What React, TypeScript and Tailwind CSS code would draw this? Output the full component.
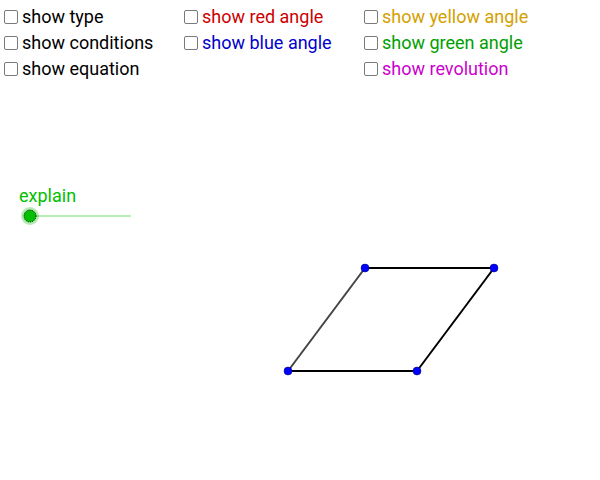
const rows: { text: string; color: string }[][] = [
  [
    { text: "show type", color: "text-black" },
    { text: "show conditions", color: "text-black" },
    { text: "show equation", color: "text-black" },
  ],
  [
    { text: "show red angle", color: "text-[#cc0000]" },
    { text: "show blue angle", color: "text-[#0000cc]" },
  ],
  [
    { text: "show yellow angle", color: "text-[#d4a000]" },
    { text: "show green angle", color: "text-[#00a000]" },
    { text: "show revolution", color: "text-[#cc00cc]" },
  ],
];

function Check({ text, color }: { text: string; color: string }) {
  return (
    <label className="flex items-center h-[26px]">
      <span className="w-[14px] h-[14px] border border-[#7a7a7a] rounded-[2px] bg-white mr-[4px]" />
      <span className={`text-[18px] leading-none ${color}`}>{text}</span>
    </label>
  );
}

export default function App() {
  return (
    <div className="relative w-[600px] h-[480px] bg-white overflow-hidden font-['Roboto',sans-serif]">
      <div className="flex pt-[4px] pl-[4px]">
        <div className="w-[180px] flex flex-col">
          {rows[0].map((r) => (
            <Check key={r.text} {...r} />
          ))}
        </div>
        <div className="w-[180px] flex flex-col">
          {rows[1].map((r) => (
            <Check key={r.text} {...r} />
          ))}
        </div>
        <div className="flex flex-col">
          {rows[2].map((r) => (
            <Check key={r.text} {...r} />
          ))}
        </div>
      </div>

      <span className="absolute left-[19px] top-[187px] text-[18px] leading-none text-[#00c000]">explain</span>

      <svg className="absolute inset-0" width="600" height="480" viewBox="0 0 600 480">
        <line x1="30" y1="216" x2="131" y2="216" stroke="#9be89b" strokeWidth="1.5" />
        <circle cx="30" cy="216" r="9" fill="#00c000" opacity="0.3" />
        <circle cx="30" cy="216" r="6" fill="#00c000" stroke="#000" strokeWidth="1" strokeDasharray="1 1" />

        <line x1="288" y1="371" x2="365" y2="268" stroke="#444" strokeWidth="2" />
        <line x1="365" y1="268" x2="494" y2="268" stroke="#000" strokeWidth="2" />
        <line x1="494" y1="268" x2="417" y2="371" stroke="#000" strokeWidth="2" />
        <line x1="417" y1="371" x2="288" y2="371" stroke="#000" strokeWidth="2" />

        {[
          [365, 268],
          [494, 268],
          [288, 371],
          [417, 371],
        ].map(([x, y]) => (
          <circle key={`${x}-${y}`} cx={x} cy={y} r="4" fill="#0000ff" stroke="#00006e" strokeWidth="0.5" />
        ))}
      </svg>
    </div>
  );
}
